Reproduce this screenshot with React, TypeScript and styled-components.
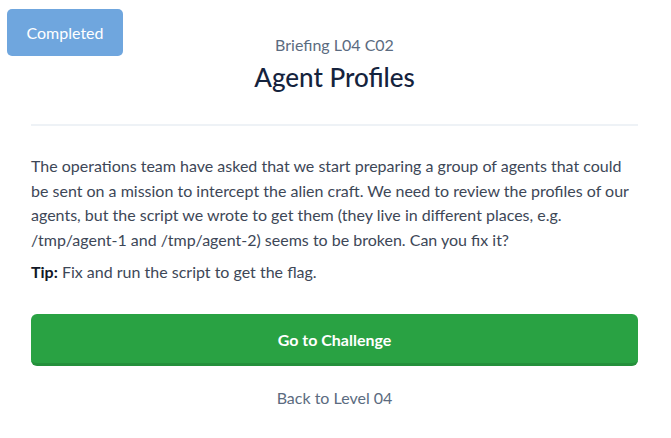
import React from "react";
import styled, { createGlobalStyle } from "styled-components";

const Global = createGlobalStyle`
  html, body { margin: 0; padding: 0; background: #ffffff; }
  body { font-family: "Lato", "Liberation Sans", sans-serif; -webkit-font-smoothing: antialiased; }
  * { box-sizing: border-box; }
`;

const Page = styled.div`
  position: relative;
  width: 671px;
  height: 438px;
  padding: 0 33px 0 31px;
  display: flex;
  flex-direction: column;
`;

const Badge = styled.div`
  position: absolute;
  left: 7px;
  top: 9px;
  width: 116px;
  height: 47px;
  border-radius: 5px;
  background: #6fa6de;
  color: #ffffff;
  font-size: 16px;
  display: flex;
  align-items: center;
  justify-content: center;
`;

const Header = styled.header`
  display: flex;
  flex-direction: column;
  align-items: center;
  padding-top: 35px;
  padding-bottom: 33px;
  border-bottom: 2px solid #eef2f6;
`;

const Kicker = styled.div`
  font-size: 16px;
  line-height: 20px;
  color: #5b6b80;
`;

const Title = styled.h1`
  margin: 8px 0 0;
  font-size: 26px;
  line-height: 28px;
  font-weight: 500;
  color: #15233d;
`;

const Body = styled.div`
  padding-top: 28px;
  font-size: 16px;
  line-height: 24.5px;
  color: #3d4757;
`;

const Para = styled.p<{ $gap?: number }>`
  margin: ${(p) => p.$gap ?? 0}px 0 0;
`;

const Strong = styled.strong`
  font-weight: 700;
  color: #111827;
`;

const PrimaryButton = styled.a`
  display: flex;
  align-items: center;
  justify-content: center;
  margin-top: 29.5px;
  height: 52px;
  padding-top: 2px;
  border-radius: 6px;
  background: #29a243;
  border-bottom: 3px solid #24903b;
  color: #ffffff;
  font-size: 16px;
  font-weight: 700;
  text-decoration: none;
`;

const BackLink = styled.a`
  align-self: center;
  margin-top: 22px;
  font-size: 16px;
  line-height: 20px;
  color: #5b6b80;
  text-decoration: none;
`;

export default function App() {
  return (
    <>
      <Global />
      <Page>
        <Badge>Completed</Badge>
        <Header>
          <Kicker>Briefing L04 C02</Kicker>
          <Title>Agent Profiles</Title>
        </Header>
        <Body>
          <Para>
            The operations team have asked that we start preparing a group of agents that could
            be sent on a mission to intercept the alien craft. We need to review the profiles of our
            agents, but the script we wrote to get them (they live in different places, e.g.
            /tmp/agent-1 and /tmp/agent-2) seems to be broken. Can you fix it?
          </Para>
          <Para $gap={8}>
            <Strong>Tip:</Strong> Fix and run the script to get the flag.
          </Para>
        </Body>
        <PrimaryButton href="#">Go to Challenge</PrimaryButton>
        <BackLink href="#">Back to Level 04</BackLink>
      </Page>
    </>
  );
}
